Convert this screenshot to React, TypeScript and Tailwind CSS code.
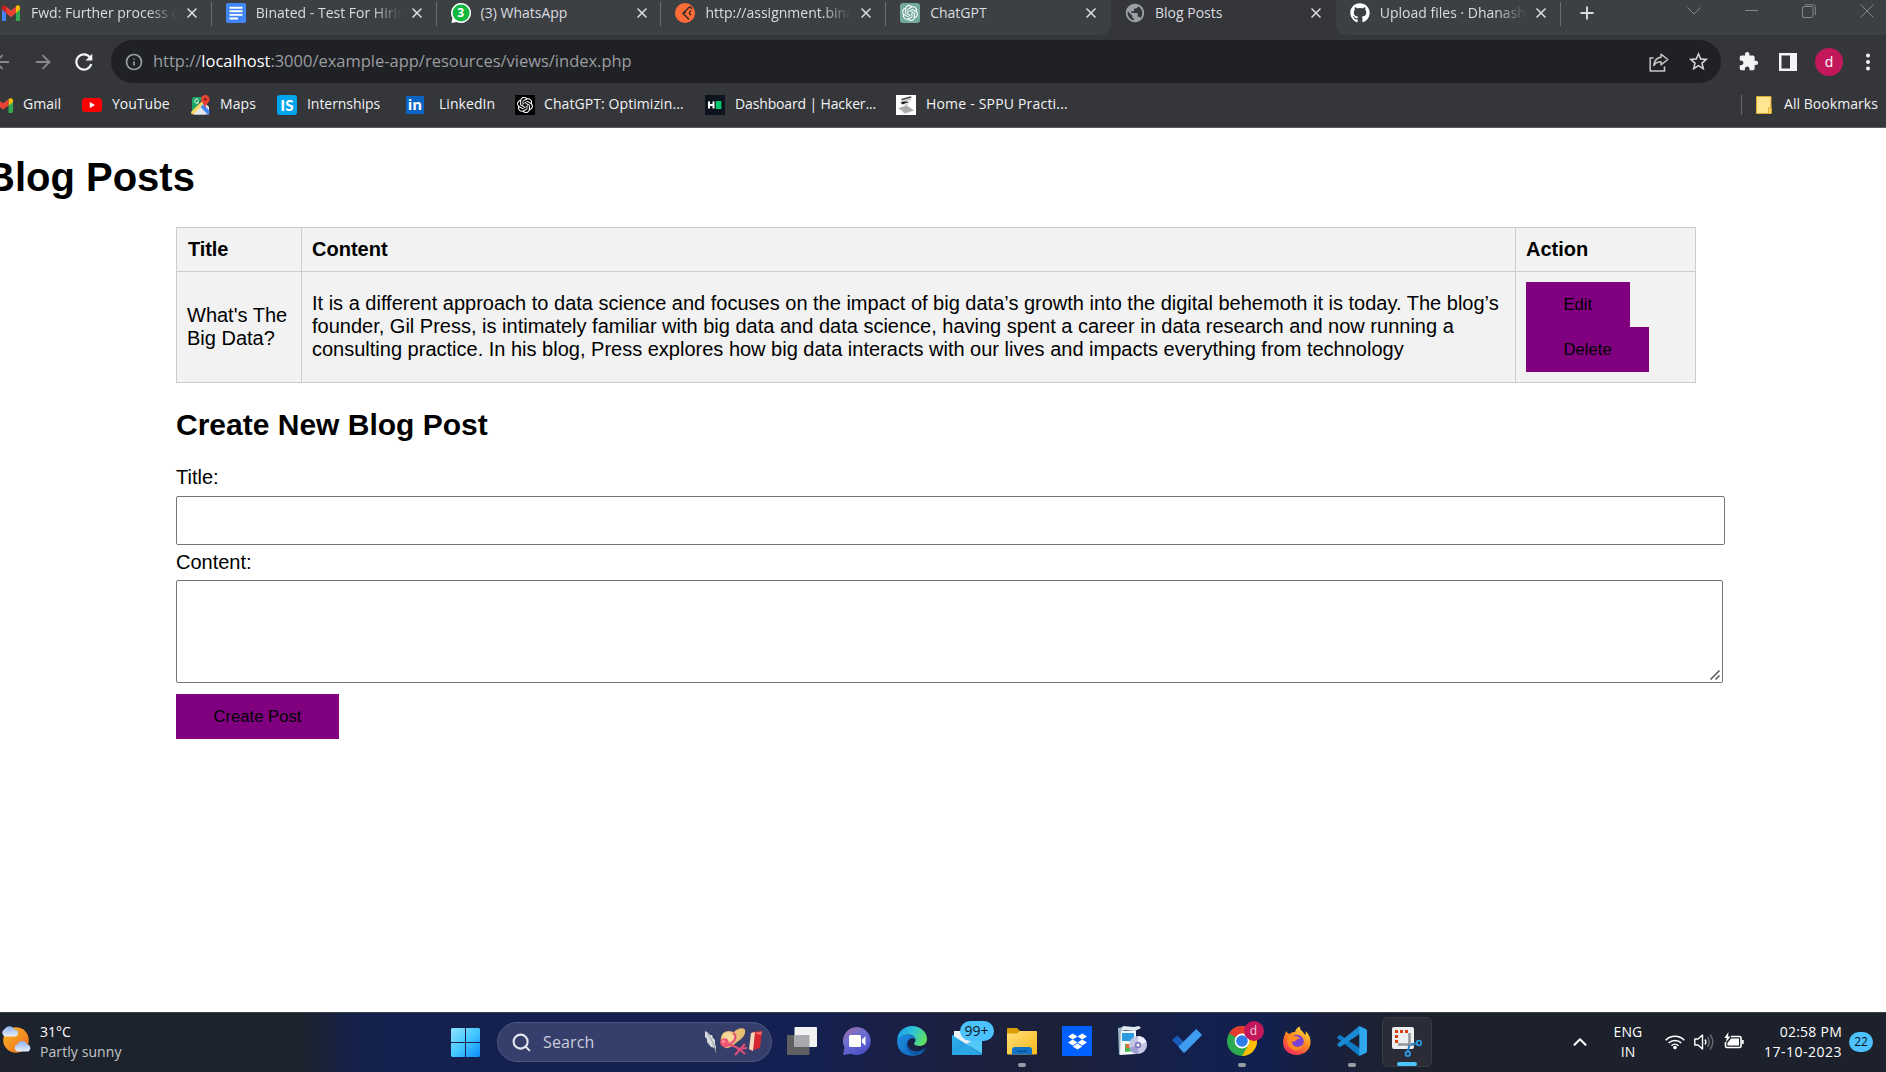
import React from "react";
import type { ReactNode } from "react";
import { FaGithub, FaDropbox } from "react-icons/fa";
import { MdExtension, MdPublic, MdStarBorder } from "react-icons/md";
import { SiOpenai } from "react-icons/si";
import { ArrowLeft, ArrowRight, Info, X, Plus, ChevronUp, ChevronDown, Minus, Search } from "lucide-react";

const UI = "font-['Open_Sans','Noto_Sans',sans-serif]";

/* ---------- favicons ---------- */

function GmailIcon({ className }: { className: string }) {
  return (
    <svg viewBox="0 0 20 16" preserveAspectRatio="none" className={className}>
      <path d="M0 2.5V14.5Q0 16 1.5 16H4.5V6Z" fill="#4285f4" />
      <path d="M20 2.5V14.5Q20 16 18.500 16H15.500V6Z" fill="#34a853" />
      <path d="M15.500 1.500V8L20 4.500V2.500C20 .2 17.500-.6 15.500 1Z" fill="#fbbc04" />
      <path d="M4.500 8V1.400L10 5.600L15.500 1.400V8L10 12.200Z" fill="#ea4335" />
      <path d="M0 2.500V4.500L4.500 8V1.400C2.500-.6 0 .2 0 2.500Z" fill="#c5221f" />
    </svg>
  );
}

function DocsIcon() {
  return (
    <svg viewBox="0 0 20 20" className="size-5">
      <rect width="20" height="20" rx="2" fill="#4285f4" />
      <path d="M3.500 4.700h13M3.500 8.300h13M3.500 11.900h13M3.500 15.500h8.500" stroke="#fff" strokeWidth="1.900" />
    </svg>
  );
}

function WhatsAppIcon() {
  return (
    <div className="relative size-5">
      <svg viewBox="0 0 20 20" className="size-5">
        <path d="M10 0a10 10 0 1 1-4.500 18.900L.4 20l1.100-4.900A10 10 0 0 1 10 0Z" fill="#fff" />
        <circle cx="10.100" cy="9.900" r="8.500" fill="#12b83f" />
      </svg>
      <span className="absolute inset-0 text-center text-[12px] leading-[20px] font-bold text-white">3</span>
    </div>
  );
}

function PostmanIcon() {
  return (
    <svg viewBox="0 0 20 20" className="size-5">
      <circle cx="10" cy="10" r="10" fill="#ff6c37" />
      <path d="M14.600 3.800 8 10.200l6 6.300M14.800 3.600l2.300 2.200M15.800 7.200l-1.500 3 1.800 2.200M8 10.200l3-1" stroke="#2f2a2a" strokeWidth="1.400" fill="none" />
    </svg>
  );
}

function YouTubeIcon() {
  return (
    <svg viewBox="0 0 20 20" className="size-5">
      <rect y="3" width="20" height="14" rx="3.500" fill="#f00" />
      <path d="M7.800 7 13 10l-5.200 3Z" fill="#fff" />
    </svg>
  );
}

function MapsIcon() {
  return (
    <svg viewBox="0 0 20 20" className="size-5">
      <path d="M1 4a2 2 0 0 1 2-2h9L2 17.500H1Z" fill="#1fa463" />
      <path d="M1 17.500 12 6l6 6v6a1.500 1.500 0 0 1-1.500 1.500H3Z" fill="#e8e8e8" />
      <path d="M9.500 12 12.500 9l6 7v1.500a1.500 1.500 0 0 1-2 1.800Z" fill="#4285f4" />
      <path d="M0 17 12.500 4.500l2 2L2.500 19.500Q0 19.500 0 17Z" fill="#fdd663" />
      <path d="M3 19.500 8.500 13l6 6.500Z" fill="#e3e6ea" />
      <path d="M14.300 0a4.300 4.300 0 0 1 4.300 4.300c0 3.200-3.600 4.200-4.300 9.200-.7-5-4.300-6-4.300-9.200A4.300 4.300 0 0 1 14.300 0Z" fill="#ea4335" />
      <circle cx="14.300" cy="4.300" r="1.500" fill="#8c1f15" />
      <path d="M7.600 5.100A2.100 2.100 0 1 0 7.800 7H5.900" stroke="#fff" strokeWidth=".9" fill="none" />
    </svg>
  );
}

function InternshipsIcon() {
  return (
    <div className="flex size-5 items-center justify-center rounded-[3px] bg-[#00a5ec] font-['Lato',sans-serif] text-[15px] leading-none font-black text-white">
      IS
    </div>
  );
}

function LinkedInIcon() {
  return (
    <div className="flex size-[18px] items-center justify-center bg-[#0a66c2] pb-0.5 font-['Open_Sans',sans-serif] text-[15px] leading-none font-bold text-white">
      in
    </div>
  );
}

function HackerRankIcon() {
  return (
    <svg viewBox="0 0 20 20" className="size-5">
      <rect width="20" height="20" fill="#0e141e" />
      <path d="M4 6.500v7M8.500 6.500v7M4 10h4.500" stroke="#fff" strokeWidth="2" />
      <rect x="10.800" y="6" width="5.600" height="8" fill="#05c770" />
    </svg>
  );
}

function SppuIcon() {
  return (
    <svg viewBox="0 0 20 20" className="size-5">
      <rect width="20" height="20" fill="#fff" />
      <path d="M5 4 14.500 1.300 16 2.500 6 5.500Z" fill="#4a4a4a" />
      <path d="M3.500 7 15 3.500 15.500 5 5 8.500Z" fill="#c4c4c4" />
      <path d="M5 7.500 8 6.500 13.500 7 6 9.500Z" fill="#1f1f1f" />
      <path d="M8 9.500 13 8 12 10.500 8.500 11.500Z" fill="#d8d8d8" />
      <path d="M2 13 11 10.500 18.500 15.500 9 18.800Z" fill="#b9b9b9" />
      <path d="M5 13.500 11.500 11.800M7 15 13.500 13M9 16.700 15.500 14.600" stroke="#8b8b8b" strokeWidth=".7" />
    </svg>
  );
}

function ChatGptTabIcon() {
  return (
    <div className="flex size-5 items-center justify-center rounded-[3px] bg-[#74aa9c] text-white">
      <SiOpenai className="size-4" />
    </div>
  );
}

/* ---------- browser chrome ---------- */

type TabInfo = { title: string; icon: ReactNode; kind: "plain" | "last" | "active" | "tail"; fade?: boolean };

const tabs: TabInfo[] = [
  { title: "Fwd: Further process of", icon: <GmailIcon className="h-4 w-[18px]" />, kind: "plain", fade: true },
  { title: "Binated - Test For Hiring", icon: <DocsIcon />, kind: "plain", fade: true },
  { title: "(3) WhatsApp", icon: <WhatsAppIcon />, kind: "plain" },
  { title: "http://assignment.bina", icon: <PostmanIcon />, kind: "plain", fade: true },
  { title: "ChatGPT", icon: <ChatGptTabIcon />, kind: "last" },
  { title: "Blog Posts", icon: <MdPublic className="size-[22px] shrink-0 text-[#9aa0a6]" />, kind: "active" },
  { title: "Upload files · Dhanash", icon: <FaGithub className="size-5 text-white" />, kind: "tail", fade: true },
];

const tabShape = {
  plain: "bg-[#3c4043]",
  last: "bg-[#3c4043] rounded-br-[10px]",
  active: "bg-[#35363a]",
  tail: "bg-[#3c4043] rounded-bl-[10px]",
};

function Tab({ tab }: { tab: TabInfo }) {
  const divider = tab.kind === "plain" || tab.kind === "tail";
  return (
    <div className={`flex h-[35px] w-[224.8px] shrink-0 items-start ${tabShape[tab.kind]}`}>
      <div className="mt-[3px] ml-[14px] flex size-5 shrink-0 items-center justify-center">{tab.icon}</div>
      <div
        className={`mt-[3px] ml-[10px] h-5 w-[146px] shrink-0 overflow-hidden text-[14px] leading-5 whitespace-nowrap text-[#dadce0] ${
          tab.fade ? "[mask-image:linear-gradient(to_right,#000_116px,transparent_146px)]" : ""
        }`}
      >
        {tab.title}
      </div>
      <X className="mt-[5px] ml-[7px] size-4 shrink-0 text-[#dadce0]" strokeWidth={2.4} />
      <div className="grow" />
      {divider && <div className="mt-0.5 h-6 w-px bg-[#6b6e72]" />}
    </div>
  );
}

function TabStrip() {
  return (
    <div className="flex h-[35px] overflow-hidden bg-[#35363a]">
      <div className="-ml-[13px] flex shrink-0">
        {tabs.map((t) => (
          <Tab key={t.title} tab={t} />
        ))}
      </div>
      <div className="flex grow items-start bg-[#3c4043] text-[#dadce0]">
        <Plus className="mt-[3px] ml-[16px] size-5" strokeWidth={2.3} />
        <div className="grow" />
        <svg viewBox="0 0 14 8" className="mt-[7px] mr-[44px] h-2 w-[14px]" fill="none" stroke="#85888b">
          <path d="M.5.500 7 7 13.500.500" />
        </svg>
        <svg viewBox="0 0 13 2" className="mt-[9px] mr-[44px] h-0.5 w-[13px]">
          <path d="M0 1.500H13" stroke="#85888b" />
        </svg>
        <svg viewBox="0 0 14 14" className="mt-1 mr-[44px] size-[14px]" fill="none" stroke="#85888b">
          <rect x=".5" y="2.500" width="10.500" height="11" rx="1.500" />
          <path d="M3 .8h8.500a1.800 1.800 0 0 1 1.800 1.800V11" />
        </svg>
        <svg viewBox="0 0 14 14" className="mt-1 mr-3 size-[14px]" fill="none" stroke="#85888b">
          <path d="M.5.5l13 13M13.500.5l-13 13" />
        </svg>
      </div>
    </div>
  );
}

function Toolbar() {
  return (
    <div className="flex h-[53px] items-center bg-[#35363a]">
      <ArrowLeft className="-ml-[9px] size-[22px] shrink-0 text-[#86888b]" strokeWidth={2} />
      <ArrowRight className="ml-[19px] size-[22px] shrink-0 text-[#86888b]" strokeWidth={2} />
      <svg viewBox="0 0 18 18" className="ml-[21px] size-[18px] shrink-0">
        <path d="M15 4.300A7.600 7.600 0 1 0 16.300 11" fill="none" stroke="#f1f3f4" strokeWidth="2.200" />
        <path d="M17.300 .8V7.600H10.500Z" fill="#f1f3f4" />
      </svg>
      <div className="ml-[18px] flex h-[43px] w-[1610px] shrink-0 items-center rounded-full bg-[#202124] text-[#9aa0a6]">
        <Info className="ml-[14px] size-[18px]" strokeWidth={2.2} />
        <div className="ml-[10px] text-[16.500px] tracking-[-0.010px] whitespace-nowrap text-[#9a9da1]">
          http://<span className="text-white">localhost</span>:3000/example-app/resources/views/index.php
        </div>
        <div className="grow" />
        <svg viewBox="0 0 20 20" className="size-5" fill="none" stroke="#c4c7c5" strokeWidth="1.500">
          <path d="M4.500 6H1.200V19H15.500V14.500" />
          <path d="M12 2.200 18.800 7.500 12 12.800V9.800C8.500 9.800 6.300 11 4.800 13.500 5.300 9 7.600 5.600 12 5.200Z" strokeLinejoin="round" />
        </svg>
        <MdStarBorder className="mr-[11px] ml-[18px] size-[23px] text-[#d5d7d9]" />
      </div>
      <MdExtension className="ml-[17px] size-[21px] shrink-0 text-[#f1f3f4]" />
      <svg viewBox="0 0 18 18" className="ml-[20px] size-[18px] shrink-0">
        <path d="M0 0H18V18H0ZM2.500 2.500V15.500H11V2.500Z" fill="#f1f3f4" fillRule="evenodd" />
      </svg>
      <div className="ml-[18px] flex size-7 shrink-0 items-center justify-center rounded-full bg-[#c2185b] pb-px text-[14px] text-white">d</div>
      <svg viewBox="0 0 6 18" className="ml-[22px] h-[18px] w-1.5 shrink-0" fill="#f1f3f4">
        <circle cx="3" cy="2.500" r="2" />
        <circle cx="3" cy="9" r="2" />
        <circle cx="3" cy="15.500" r="2" />
      </svg>
    </div>
  );
}

const bookmarks = [
  { label: "Gmail", icon: <GmailIcon className="h-[15px] w-5" />, width: "w-[89px]", gap: "ml-[10px]", track: "tracking-normal" },
  { label: "YouTube", icon: <YouTubeIcon />, width: "w-[109px]", gap: "ml-[10px]", track: "tracking-normal" },
  { label: "Maps", icon: <MapsIcon />, width: "w-[86px]", gap: "ml-[9px]", track: "tracking-[0.080px]" },
  { label: "Internships", icon: <InternshipsIcon />, width: "w-[129px]", gap: "ml-[10px]", track: "tracking-[-0.050px]" },
  { label: "LinkedIn", icon: <LinkedInIcon />, width: "w-[109px]", gap: "ml-[13px]", track: "tracking-[0.050px]" },
  {
    label: "ChatGPT: Optimizin...",
    icon: (
      <div className="flex size-5 items-center justify-center bg-black text-white">
        <SiOpenai className="size-4" />
      </div>
    ),
    width: "w-[190px]",
    gap: "ml-[9px]",
    track: "tracking-[0.080px]",
  },
  { label: "Dashboard | Hacker...", icon: <HackerRankIcon />, width: "w-[191px]", gap: "ml-[10px]", track: "tracking-[-0.140px]" },
  { label: "Home - SPPU Practi...", icon: <SppuIcon />, width: "w-[190px]", gap: "ml-[10px]", track: "tracking-[0.190px]" },
];

function BookmarksBar() {
  return (
    <div className="flex h-10 items-center border-b border-[#5b5c60] bg-[#35363a] pb-[5px] text-[14px] leading-[18px] text-[#f1f3f4]">
      <div className="-ml-[7px] flex grow items-center">
        {bookmarks.map((b) => (
          <div key={b.label} className={`flex shrink-0 items-center ${b.width}`}>
            <div className="flex w-5 shrink-0 justify-start">{b.icon}</div>
            <span className={`pb-0.5 whitespace-nowrap ${b.gap} ${b.track}`}>{b.label}</span>
          </div>
        ))}
      </div>
      <div className="h-5 w-px bg-[#68696d]" />
      <svg viewBox="0 0 16 18" className="ml-[14px] h-[18px] w-4">
        <path d="M.5 .5H15V12.500H13.500V17.500H.5Z" fill="#ffe591" stroke="#d9ab2e" />
        <rect x="12.500" y="12" width="3" height="5.500" fill="#ffd75e" stroke="#d9ab2e" strokeWidth=".8" />
      </svg>
      <span className="ml-[12px] w-[102px] pb-0.5 tracking-[0.050px] whitespace-nowrap">All Bookmarks</span>
    </div>
  );
}

/* ---------- page ---------- */

function PurpleButton({ children, width, line = "leading-[45px]" }: { children: ReactNode; width: string; line?: string }) {
  return <button className={`block h-[45px] bg-[#800080] pl-[37.500px] text-left align-top text-[16.670px] text-black ${line} ${width}`}>{children}</button>;
}

function BlogPage() {
  return (
    <main className="h-[884px] overflow-hidden bg-white font-['Liberation_Sans',Arial,sans-serif] text-[20px] leading-[23px] text-black">
      <h1 className="mt-[26px] -ml-[14px] h-[46px] text-[40px] leading-[46px] font-bold">Blog Posts</h1>
      <div className="mt-[27px] ml-[176px] grid w-[1520px] grid-cols-[124px_1213px_179px] gap-px border border-[#ccc] bg-[#ccc] *:bg-[#f2f2f2]">
        <div className="h-[43px] py-2.5 pl-[11px] font-bold tracking-[-0.100px]">Title</div>
        <div className="h-[43px] py-2.5 pl-[10px] font-bold">Content</div>
        <div className="h-[43px] py-2.5 pl-[10px] font-bold">Action</div>
        <div className="flex h-[110px] items-center pl-2.5">
          <div>
            What's The
            <br />
            Big Data?
          </div>
        </div>
        <div className="flex h-[110px] items-center pb-0.5 pl-[10px]">
          <div className="whitespace-nowrap">
            It is a different approach to data science and focuses on the impact of big data’s growth into the digital behemoth it is today. The blog’s
            <br />
            founder, Gil Press, is intimately familiar with big data and data science, having spent a career in data research and now running a
            <br />
            consulting practice. In his blog, Press explores how big data interacts with our lives and impacts everything from technology
          </div>
        </div>
        <div className="h-[110px] py-2.5 pl-2.5">
          <PurpleButton width="w-[104px]" line="leading-[45px] pb-[2px]">Edit</PurpleButton>
          <PurpleButton width="w-[123px]" line="leading-[45px] pb-[2px]">Delete</PurpleButton>
        </div>
      </div>
      <form className="ml-[176px]" onSubmit={(e) => e.preventDefault()}>
        <h2 className="mt-[25px] text-[30px] leading-[34px] font-bold">Create New Blog Post</h2>
        <label className="mt-[24px] block">Title:</label>
        <input className="mt-[7px] block h-[49px] w-[1549px] rounded-[2px] border border-[#767676] bg-white" />
        <label className="mt-[6px] block">Content:</label>
        <div className="relative mt-[6px] h-[103px] w-[1547px]">
          <textarea className="block size-full resize-none rounded-[2px] border border-[#767676] bg-white" />
          <svg viewBox="0 0 10 10" className="absolute right-[3px] bottom-[3px] size-[10px]" stroke="#555" strokeWidth="1.500">
            <path d="M.5 9.500 9.500.500M5.500 9.500 9.500 5.500" />
          </svg>
        </div>
        <div className="mt-[11px]">
          <PurpleButton width="w-[163px]">Create Post</PurpleButton>
        </div>
      </form>
    </main>
  );
}

/* ---------- taskbar ---------- */

function WeatherIcon() {
  return (
    <svg viewBox="0 0 32 30" className="h-[30px] w-8">
      <defs>
        <linearGradient id="sun" x1="0" y1="0" x2="1" y2="1">
          <stop offset="0" stopColor="#fbb72c" />
          <stop offset="1" stopColor="#ee6a17" />
        </linearGradient>
        <linearGradient id="cloud" x1="0" y1="0" x2="0" y2="1">
          <stop offset="0" stopColor="#8cb0ee" />
          <stop offset="1" stopColor="#e8effb" />
        </linearGradient>
      </defs>
      <circle cx="16" cy="15" r="12.800" fill="url(#sun)" />
      <path d="M5 11.500a4 4 0 0 1-.3-7.500 5.200 5.200 0 0 1 9.300.500 3.500 3.500 0 0 1 1 7Z" fill="url(#cloud)" />
      <path d="M17.500 26.500a3.800 3.800 0 0 1 0-7.300 5.300 5.300 0 0 1 9.800.3 3.600 3.600 0 0 1 .5 7Z" fill="url(#cloud)" />
    </svg>
  );
}

function StartIcon() {
  return (
    <svg viewBox="0 0 29 29" className="size-[29px]">
      <defs>
        <linearGradient id="start" x1="0" y1="0" x2="29" y2="29" gradientUnits="userSpaceOnUse">
          <stop offset="0" stopColor="#8fe2ff" />
          <stop offset=".5" stopColor="#45c8ff" />
          <stop offset="1" stopColor="#0a8bfa" />
        </linearGradient>
      </defs>
      <path d="M1 0H14V14H0V1ZM15 0H28L29 1V14H15ZM0 15H14V29H1L0 28ZM15 15H29V28L28 29H15Z" fill="url(#start)" />
    </svg>
  );
}

function SearchArt() {
  return (
    <svg viewBox="0 0 60 28" className="h-7 w-[60px]">
      <path d="M1 3Q4 4 6 7L8 7 9 10 11 12 11 16 12 19 12 24 11 20 7 19 3 14 3 11 1 9Z" fill="#d7dadd" />
      <path d="M3 5Q9 12 12 25" stroke="#878b92" strokeWidth=".8" fill="none" />
      <path d="M17 15C16 9 18 3 25 3L30 4C33 0 40-1 41 2 42 7 38 11 33 14 30 17 25 21 21 20Z" fill="#e9bc74" />
      <path d="M18 8C20 3 28 3 30 8 32 12 27 15 22 15Z" fill="#f6d99b" />
      <path d="M29 5Q34 8 29 14L21 19" stroke="#e8537c" strokeWidth="2.200" fill="none" />
      <circle cx="20.500" cy="14.500" r="4.300" fill="#ee5874" />
      <circle cx="19.500" cy="13.500" r="1.600" fill="#ff91a2" />
      <path d="M24 17Q32 17 41 26M41 16 31 27M33 21 43 20" stroke="#e44d77" strokeWidth="2" fill="none" />
      <path d="M48 4 58 3 56 20 46 23Z" fill="#d5262f" />
      <path d="M47 5 51 4 49 23 45 21Z" fill="#f2d9bd" />
      <path d="M50 5 58 3.500 57 7Z" fill="#ff6b61" />
    </svg>
  );
}

function TaskViewIcon() {
  return (
    <svg viewBox="0 0 30 30" className="size-[30px]">
      <rect y="9" width="22.500" height="20" rx="1" fill="#5f5f60" />
      <rect x="7.500" y="1" width="22.500" height="20" rx="1" fill="#f3f3f3" />
      <path d="M7.500 9H22.500V21H7.500Z" fill="#a9aaad" />
    </svg>
  );
}

function ChatIcon() {
  return (
    <svg viewBox="0 0 30 30" className="size-[30px]">
      <defs>
        <linearGradient id="chat" x1="0" y1="0" x2=".6" y2="1">
          <stop offset="0" stopColor="#a5699c" />
          <stop offset=".45" stopColor="#6f6fd2" />
          <stop offset="1" stopColor="#4c50c6" />
        </linearGradient>
      </defs>
      <path d="M15 1A14 14 0 1 1 9 27.800L1 29 2.500 21.500A14 14 0 0 1 15 1Z" fill="url(#chat)" />
      <rect x="7" y="9" width="12" height="12" rx="1.500" fill="#fff" />
      <path d="M20 13.500 23.500 10.200V19.800L20 16.500Z" fill="#fff" />
    </svg>
  );
}

function EdgeIcon() {
  return (
    <svg viewBox="0 0 30 30" className="size-[30px]">
      <defs>
        <linearGradient id="edgeTop" x1="0" y1=".3" x2="1" y2=".6">
          <stop offset="0" stopColor="#1e9de8" />
          <stop offset=".5" stopColor="#2fc5d6" />
          <stop offset="1" stopColor="#62e356" />
        </linearGradient>
        <linearGradient id="edgeLow" x1="0" y1="0" x2="1" y2="1">
          <stop offset="0" stopColor="#1d8fe0" />
          <stop offset="1" stopColor="#1166bd" />
        </linearGradient>
      </defs>
      <path d="M15 0C23.500 0 30 6 30 13 30 17.500 26.500 20 22.500 20 19 20 17 18.700 17 17.700 17 16.900 18.500 16 18.500 14 18.500 11 15.500 8.500 11.500 8.500 6 8.500 1 12 .2 15 0 6.500 6.500 0 15 0Z" fill="url(#edgeTop)" />
      <path d="M.1 15C.5 11.500 5 8.400 11 8.400 15 8.400 18.300 10.800 18.400 13.500 17 11.900 14 11.800 12 13.500 8.500 16.500 9.500 24 16 28L20 29C10 32 0 26 .1 15Z" fill="url(#edgeLow)" />
      <path d="M11.500 14C7 19 11 27.500 20 27.500 24 27.500 27 24.500 28.500 22.500 25 31 13 31 9.500 26 6.500 21 8 16 11.500 14Z" fill="#1672c8" />
      <path d="M11.300 14.300C9.500 17 10.500 21.500 14.500 24 19 26.500 24.500 25 28 22 29.300 21.500 25 28.500 18 29 11 28 7.500 19.500 11.300 14.300Z" fill="#0c59a4" />
    </svg>
  );
}

function MailIcon() {
  return (
    <svg viewBox="0 0 30 30" className="size-[30px]">
      <defs>
        <linearGradient id="mail" x1="0" y1="0" x2="1" y2="1">
          <stop offset="0" stopColor="#2fb4ef" />
          <stop offset="1" stopColor="#2387d8" />
        </linearGradient>
      </defs>
      <path d="M0 9 15 0 30 9V14H0Z" fill="#0a4f93" />
      <path d="M2 5H28V14L15 21 2 13Z" fill="#eef2f6" />
      <path d="M0 9 30 28Q30 29 29 29H1Q0 29 0 28Z" fill="url(#mail)" />
      <path d="M30 9V28L14 18Z" fill="#52c9f7" />
      <path d="M0 28 14 18.300 29.500 29H1Q0 29 0 28Z" fill="#2aa6e4" />
    </svg>
  );
}

function ExplorerIcon() {
  return (
    <svg viewBox="0 0 30 30" className="size-[30px]">
      <defs>
        <linearGradient id="folder" x1="0" y1="0" x2="1" y2="1">
          <stop offset="0" stopColor="#ffe07a" />
          <stop offset="1" stopColor="#f9b81a" />
        </linearGradient>
      </defs>
      <path d="M0 3Q0 2 1 2H10L13 5V9H0Z" fill="#dd9d09" />
      <path d="M0 7.500H10L13 5H29Q30 5 30 6V27.500Q30 28.500 29 28.500H1Q0 28.500 0 27.500Z" fill="url(#folder)" />
      <path d="M5 28.500V24Q5 21 8 21H22Q25 21 25 24V28.500Z" fill="#1173c7" />
      <path d="M10 25.300H20" stroke="#0b4f93" strokeWidth="1.600" />
    </svg>
  );
}

function InstallerIcon() {
  return (
    <svg viewBox="0 0 30 30" className="size-[30px]">
      <path d="M1 2 6 1 7 5 4 28 2 29Z" fill="#9db4c4" />
      <path d="M6 0 17 1 22 0 24 2 18 5 4 4Z" fill="#dfe8ee" />
      <path d="M4 5H19V28L3 29Z" fill="#f3f7fa" />
      <rect x="5" y="7" width="12" height="8" fill="#2d9be0" />
      <path d="M8 18h9v7l-9 1Z" fill="#45b849" />
      <path d="M9 18h5v4h-5Z" fill="#e96b38" />
      <circle cx="21" cy="19" r="9" fill="#c6c6e6" />
      <path d="M21 10a9 9 0 0 1 8.500 6L21 19Z" fill="#efeffa" />
      <path d="M21 28a9 9 0 0 1-8.500-6L21 19Z" fill="#9f9fd0" />
      <circle cx="21" cy="19" r="3.200" fill="#8076be" />
      <circle cx="21" cy="19" r="1.500" fill="#fff" />
    </svg>
  );
}

function TodoIcon() {
  return (
    <svg viewBox="0 0 30 30" className="size-[30px]">
      <path d="M5.300 9.500 14.500 18.500 10 24 .7 15Q0 14 .7 13.200Z" fill="#195ab9" />
      <path d="M24.200 3.100 29.300 8Q30 9 29.300 9.800L13 26.300Q12 27.200 11 26.300L7 21.500Q6.300 20.800 7 20Z" fill="#3f9df1" />
    </svg>
  );
}

function ChromeIcon() {
  return (
    <svg viewBox="0 0 30 30" className="size-[30px]">
      <circle cx="15" cy="15" r="15" fill="#2da94f" />
      <path d="M15 15 2 7.500A15 15 0 0 1 28 7.500H15Z" fill="#e33b2e" />
      <path d="M28 7.500A15 15 0 0 1 15 30L21.500 18.500 15 7.500Z" fill="#fdbd00" />
      <path d="M2 7.500 8.500 18.700 15 15Z" fill="#2da94f" />
      <circle cx="15" cy="15" r="7.400" fill="#fff" />
      <circle cx="15" cy="15" r="5.800" fill="#2b7de9" />
    </svg>
  );
}

function FirefoxIcon() {
  return (
    <svg viewBox="0 0 30 30" className="size-[30px]">
      <defs>
        <linearGradient id="fox" x1=".8" y1="0" x2=".2" y2="1">
          <stop offset="0" stopColor="#ffe23e" />
          <stop offset=".45" stopColor="#ff8a1f" />
          <stop offset="1" stopColor="#f5225f" />
        </linearGradient>
      </defs>
      <path d="M4 5Q5 7 7.500 8 10 5.500 13 6 14 2 17.500 .5 18 4 21 6 22 8 23.500 9 24 7 23.500 5 29 10 28.500 17C28 24 22 29 14.500 29 7 29 1 24 1 16 1 12 3 9 4 5Z" fill="url(#fox)" />
      <circle cx="15" cy="15.500" r="6.800" fill="#7a42d8" />
      <path d="M6 9.500Q10 8 13.500 10.500 17 10 18 12.500 15 12.500 14.500 14 13 16 10 15.500 10 19 13.500 20.500 18 22 21.800 18 20 25 13 24.500 5 22 5 14Z" fill="#ff8c22" />
    </svg>
  );
}

function VsCodeIcon() {
  return (
    <svg viewBox="0 0 30 30" className="size-[30px]">
      <path d="M2.800 8.800 .6 10.800Q0 11.500 .6 12.200L22.300 30 24 23Z" fill="#0f7bc4" />
      <path d="M2.800 21.200 .6 19.200Q0 18.500 .6 17.800L22.300 0 24 7Z" fill="#1a8ad4" />
      <path d="M22.300 0 28.900 3Q30 3.500 30 4.700V25.300Q30 26.500 28.900 27L22.300 30Z" fill="#2ea7ee" />
    </svg>
  );
}

function SnipIcon() {
  return (
    <svg viewBox="0 0 30 30" className="size-[30px]">
      <rect width="22" height="22" rx="2" fill="#eceeef" />
      <g fill="#d8410f">
        <path d="M3 3h3v3h-3zM8 3h3v3h-3zM13 3h3v3h-3zM3 8h3v3h-3zM3 13h3v3h-3z" />
      </g>
      <path d="M17.500 6V17.500M6 17.500H22" stroke="#8f969c" strokeWidth="2.500" />
      <path d="M17.500 18 15.800 24M19 17.500 24 16.500" stroke="#2083c7" strokeWidth="2" />
      <circle cx="15.800" cy="26.800" r="2.300" fill="none" stroke="#2a9ae0" strokeWidth="1.800" />
      <circle cx="27" cy="16" r="2.300" fill="none" stroke="#2a9ae0" strokeWidth="1.800" />
    </svg>
  );
}

function DropboxIcon() {
  return (
    <div className="flex size-[30px] items-center justify-center bg-[#0061fe] text-white">
      <FaDropbox className="size-[19px]" />
    </div>
  );
}

function AppSlot({ children, running = false }: { children: ReactNode; running?: boolean }) {
  return (
    <div className="relative flex h-[60px] w-[55px] shrink-0 items-center justify-center pb-1">
      {children}
      {running && <div className="absolute bottom-[6px] left-[23px] h-1 w-2 rounded-full bg-[#9a9ca5]" />}
    </div>
  );
}

function Taskbar() {
  return (
    <footer className="flex h-[60px] items-start border-t border-[#3a3e48] bg-[linear-gradient(90deg,#1d222c_0px,#1c232d_300px,#14204c_360px,#14204f_520px,#132051_800px,#1a2045_900px,#1c2038_1060px,#14204c_1180px,#12204f_1260px,#1b2035_1360px,#1c212b_1430px,#1d212b_1886px)] text-white">
      <div className="mt-[12px] w-8">
        <WeatherIcon />
      </div>
      <div className="mt-[9px] ml-[8px] w-[411px] text-[14px] leading-5">
        <div>31°C</div>
        <div className="tracking-[0.080px] text-[#c3c5c9]">Partly sunny</div>
      </div>
      <div className="mt-[15px]">
        <StartIcon />
      </div>
      <div className="mt-[9px] ml-[17px] flex h-10 w-[275px] items-center rounded-full border border-[#4e5880] bg-[#363f6b]">
        <Search className="ml-[13px] size-[21px] text-[#e4e6ee]" strokeWidth={2.4} />
        <span className="ml-[11px] text-[16px] tracking-[0.150px] text-[#c9cddb]">Search</span>
        <div className="grow" />
        <div className="mr-[7px]">
          <SearchArt />
        </div>
      </div>
      <div className="ml-[2.500px] flex">
        <AppSlot><TaskViewIcon /></AppSlot>
        <AppSlot><ChatIcon /></AppSlot>
        <AppSlot><EdgeIcon /></AppSlot>
        <AppSlot>
          <MailIcon />
          <div className="absolute top-[8px] left-[20px] h-5 w-[34px] rounded-full bg-[#4cc2ff] text-center text-[14px] leading-5 text-[#10131a]">99+</div>
        </AppSlot>
        <AppSlot running><ExplorerIcon /></AppSlot>
        <AppSlot><DropboxIcon /></AppSlot>
        <AppSlot><InstallerIcon /></AppSlot>
        <AppSlot><TodoIcon /></AppSlot>
        <AppSlot running>
          <ChromeIcon />
          <div className="absolute top-[8px] left-[29px] size-5 rounded-full bg-[#c2185b] text-center text-[12px] leading-[19px] text-[#f3cddb]">d</div>
        </AppSlot>
        <AppSlot><FirefoxIcon /></AppSlot>
        <AppSlot running><VsCodeIcon /></AppSlot>
        <div className="relative mt-1 ml-[2px] flex size-[50px] items-start rounded-[5px] border border-[#363a45] bg-[#2a2d37] pt-[9px] pl-[9px]">
          <SnipIcon />
          <div className="absolute bottom-0 left-[14px] h-1 w-5 rounded-full bg-[#4cc2ff]" />
        </div>
      </div>
      <div className="grow" />
      <ChevronUp className="mt-[18px] h-[22px] w-[22px]" strokeWidth={2.2} />
      <div className="mt-[9px] ml-[17px] w-[40px] text-center text-[14px] leading-5 tracking-[0.100px]">
        ENG
        <br />
        IN
      </div>
      <svg viewBox="0 0 20 16" className="mt-[21px] ml-[17px] h-4 w-5" fill="none" stroke="#fff" strokeWidth="1.600">
        <path d="M.7 6.200A13 13 0 0 1 19.300 6.200M3.700 9A9 9 0 0 1 16.300 9M6.500 11.700A5 5 0 0 1 13.500 11.700" />
        <circle cx="10" cy="13.600" r="1.800" fill="#fff" stroke="none" />
      </svg>
      <svg viewBox="0 0 20 18" className="mt-[20px] ml-[9px] h-[18px] w-5" fill="none" stroke="#fff" strokeWidth="1.400">
        <path d="M.8 6H4L8.500 2V16L4 12H.8Z" strokeLinejoin="round" />
        <path d="M11 6.500Q12.800 9 11 11.500" />
        <path d="M13.500 4Q17 9 13.500 14M16 1.500Q21.500 9 16 16.500" stroke="#6a6d75" />
      </svg>
      <svg viewBox="0 0 20 18" className="mt-[19px] ml-[10px] h-[18px] w-5">
        <path d="M7 4.500H15.500Q17 4.500 17 6V14Q17 15.500 15.500 15.500H3Q1.500 15.500 1.500 14V10" fill="none" stroke="#fff" strokeWidth="1.600" />
        <path d="M7 6.500H15V13.500H3.500V11Z" fill="#fff" />
        <path d="M18 8h1.700v4H18zM4.500 0 .3 6H2.800L1.800 10.500 6.500 4.500H4Z" fill="#fff" />
      </svg>
      <div className="mt-[9px] ml-[11px] w-[87px] text-right text-[14px] leading-5 whitespace-nowrap">
        <div className="tracking-[0.250px]">02:58 PM</div>
        <div className="tracking-[0.500px]">17-10-2023</div>
      </div>
      <div className="mt-[19px] mr-[13px] ml-[7px] h-5 w-6 rounded-full bg-[#4cc2ff] text-center text-[12px] leading-5 text-[#10131a]">22</div>
    </footer>
  );
}

export default function App() {
  return (
    <div className={`h-[1072px] w-[1886px] overflow-hidden bg-white ${UI}`}>
      <TabStrip />
      <Toolbar />
      <BookmarksBar />
      <BlogPage />
      <Taskbar />
    </div>
  );
}
